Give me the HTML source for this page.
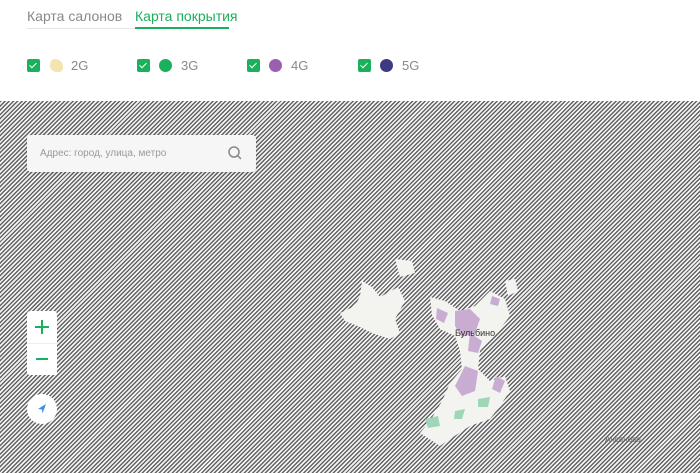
<!DOCTYPE html>
<html><head><meta charset="utf-8"><style>
*{margin:0;padding:0;box-sizing:border-box}
body{width:700px;height:473px;overflow:hidden;background:#fff;font-family:"Liberation Sans",sans-serif;position:relative}
.tab{position:absolute;top:8px;font-size:14px}
.map{position:absolute;left:0;top:101px;width:700px;height:372px;background:repeating-linear-gradient(135deg,#626262 0,#626262 1.4px,#f4f4f4 1.4px,#f4f4f4 3px)}
.cb{position:absolute;top:59px;width:13px;height:13px;background:#1ab05c;border-radius:2px}
.cb:after{content:"";position:absolute;left:4px;top:2px;width:3px;height:6px;border:solid #fff;border-width:0 1.5px 1.5px 0;transform:rotate(45deg)}
.dot{position:absolute;top:59px;width:13px;height:13px;border-radius:50%}
.lbl{position:absolute;top:58px;font-size:13px;color:#888}
</style></head><body>
<div class="tab" style="left:27px;color:#888">Карта салонов</div>
<div style="position:absolute;left:27px;top:28px;width:108px;height:1px;background:#e6e6e6"></div>
<div class="tab" style="left:135px;color:#1ab05c">Карта покрытия</div>
<div style="position:absolute;left:135px;top:27px;width:94px;height:2px;background:#1ab05c"></div>

<div class="cb" style="left:27px"></div><div class="dot" style="left:50px;background:#f4e4b0;border-radius:40% 60% 30% 50%"></div><div class="lbl" style="left:71px">2G</div>
<div class="cb" style="left:137px"></div><div class="dot" style="left:159px;background:#1ab05c"></div><div class="lbl" style="left:181px">3G</div>
<div class="cb" style="left:247px"></div><div class="dot" style="left:269px;background:#9b5fb0"></div><div class="lbl" style="left:291px">4G</div>
<div class="cb" style="left:358px"></div><div class="dot" style="left:380px;background:#3d3a82"></div><div class="lbl" style="left:402px">5G</div>

<div class="map">
<svg width="700" height="372" style="position:absolute;left:0;top:0">
<g fill="#f3f3ef">
<polygon points="362,180 372,186 380,196 398,186 405,200 395,218 400,232 390,238 372,232 360,226 345,220 340,212 355,205 360,195"/>
<polygon points="395,158 412,160 415,172 400,176"/>
<polygon points="430,196 445,200 460,210 475,205 490,190 505,198 510,215 500,228 490,238 480,250 478,268 490,280 505,275 510,290 500,305 490,318 470,325 450,338 440,345 420,332 430,320 442,300 450,282 462,268 460,250 455,235 440,228 432,214"/>
<polygon points="505,180 515,178 518,190 508,195"/>
</g>
<g fill="#c9acd2">
<polygon points="437,207 448,212 444,222 436,218"/>
<polygon points="455,210 470,208 480,218 475,232 462,236 455,225"/>
<polygon points="470,232 482,240 478,252 468,250"/>
<polygon points="465,265 478,270 475,290 462,295 455,285"/>
<polygon points="492,195 500,198 498,205 490,203"/>
<polygon points="496,275 505,280 500,292 492,288"/>
</g>
<g fill="#9fd6b8">
<polygon points="425,318 438,315 440,325 428,327"/>
<polygon points="478,298 490,296 488,306 478,306"/>
<polygon points="455,310 465,308 462,318 454,318"/>
</g>
</svg>
<div style="position:absolute;left:455px;top:227px;font-size:9px;color:#333">Бульбино</div>
<div style="position:absolute;left:605px;top:334px;font-size:8px;color:#666">Ансаново</div>
<div style="position:absolute;left:27px;top:34px;width:229px;height:37px;background:#f6f6f6;border-radius:4px;box-shadow:0 1px 4px rgba(0,0,0,.15)">
<div style="position:absolute;left:13px;top:13px;font-size:10px;color:#999">Адрес: город, улица, метро</div>
<svg width="16" height="16" style="position:absolute;left:200px;top:10px"><circle cx="7" cy="7" r="5" fill="none" stroke="#888" stroke-width="1.5"/><line x1="10.5" y1="10.5" x2="14" y2="14" stroke="#888" stroke-width="1.5"/></svg>
</div>
<div style="position:absolute;left:27px;top:210px;width:30px;height:64px;background:#fff;border-radius:3px">
<div style="position:absolute;left:0;top:32px;width:30px;height:1px;background:#eee"></div>
<div style="position:absolute;left:8px;top:15px;width:14px;height:2px;background:#1ab05c"></div>
<div style="position:absolute;left:14px;top:9px;width:2px;height:14px;background:#1ab05c"></div>
<div style="position:absolute;left:9px;top:47px;width:12px;height:2px;background:#1ab05c"></div>
</div>
<div style="position:absolute;left:27px;top:293px;width:30px;height:30px;background:#fff;border-radius:50%">
<svg width="30" height="30"><polygon points="19,10 11,15 15,15.5 15.5,19.5" fill="#3a8de0"/></svg>
</div>
</div>
</body></html>
